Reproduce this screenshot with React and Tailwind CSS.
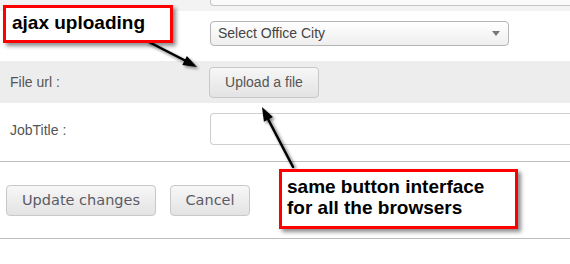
const arial = { fontFamily: '"Liberation Sans", Arial, sans-serif' };
const verdana = { fontFamily: '"DejaVu Sans", Verdana, sans-serif' };

function Callout({ className, children }) {
  return (
    <div
      className={`absolute border-[3px] border-[#ff0000] bg-white font-bold text-black shadow-[3px_3px_4px_rgba(0,0,0,0.45)] ${className}`}
      style={arial}
    >
      {children}
    </div>
  );
}

function Arrows() {
  return (
    <svg className="pointer-events-none absolute left-0 top-0" width="570" height="264">
      <defs>
        <filter id="blur" x="-20%" y="-20%" width="140%" height="140%">
          <feGaussianBlur stdDeviation="1.6" />
        </filter>
      </defs>
      <g opacity="0.45" filter="url(#blur)" transform="translate(2 2)">
        <path d="M147 41 L186 61" stroke="#000" strokeWidth="3" />
        <polygon points="197,67 182.3,64.9 186.9,56.1" fill="#000" />
        <path d="M293 167 L268 119" stroke="#000" strokeWidth="3" />
        <polygon points="262,107 272.9,117.1 263.9,121.7" fill="#000" />
      </g>
      <path d="M147 41 L186 61" stroke="#000" strokeWidth="2.5" strokeLinecap="round" />
      <polygon points="197,67 182.3,64.9 186.9,56.1" fill="#000" />
      <path d="M293 167 L268 119" stroke="#000" strokeWidth="2.5" strokeLinecap="round" />
      <polygon points="262,107 272.9,117.1 263.9,121.7" fill="#000" />
    </svg>
  );
}

function GrayButton({ className, children, font }) {
  return (
    <button
      type="button"
      className={`shrink-0 rounded-[4px] border border-[#c8c8c8] bg-gradient-to-b from-[#f7f7f7] to-[#e3e3e3] ${className}`}
      style={font}
    >
      {children}
    </button>
  );
}

export default function App() {
  return (
    <div className="relative h-[264px] w-[570px] overflow-hidden bg-white text-[14px] text-[#555]" style={arial}>
      <div className="h-[11px] bg-[#f3f3f3] pl-[210px]">
        <div className="h-[6px] rounded-bl-[4px] border-b border-l border-[#c4c4c4] bg-[#fafafa]" />
      </div>

      <div className="flex h-[50px] items-start pl-[210px] pt-[10px]">
        <div className="flex h-[25px] w-[299px] items-center justify-between rounded-[4px] border border-[#b5b5b5] bg-gradient-to-b from-white to-[#eeeeee] pl-[7px] pr-[8px] text-[14px] text-[#444]">
          <span>Select Office City</span>
          <span className="h-0 w-0 border-x-[4px] border-t-[5px] border-x-transparent border-t-[#777]" />
        </div>
      </div>

      <div className="flex h-[42px] items-center bg-[#ededed]">
        <span className="w-[209px] shrink-0 pl-[10px]">File url :</span>
        <GrayButton className="h-[31px] w-[110px] text-[14px] text-[#555]">Upload a file</GrayButton>
      </div>

      <div className="flex h-[59px] border-b border-[#bdbdbd] pt-[10px]">
        <span className="w-[210px] shrink-0 pl-[10px] pt-[7px]">JobTitle :</span>
        <div className="h-[32px] flex-1 rounded-l-[4px] border border-r-0 border-[#cfcfcf] bg-white" />
      </div>

      <div className="flex h-[77px] gap-[14px] border-b border-[#bdbdbd] pl-[6px] pt-[23px]">
        <GrayButton className="h-[31px] w-[150px] text-[14.5px] text-[#5b5b66]" font={verdana}>
          Update changes
        </GrayButton>
        <GrayButton className="h-[31px] w-[80px] text-[14.5px] text-[#5b5b66]" font={verdana}>
          Cancel
        </GrayButton>
      </div>

      <Arrows />

      <Callout className="left-[3px] top-[5px] h-[38px] w-[170px] pl-[6px] pt-[3px] text-[19px] leading-[24px]">
        ajax uploading
      </Callout>
      <Callout className="left-[279px] top-[169px] h-[60px] w-[239px] pl-[5px] pt-[4px] text-[19px] leading-[21px]">
        same button interface
        <br />
        for all the browsers
      </Callout>
    </div>
  );
}
